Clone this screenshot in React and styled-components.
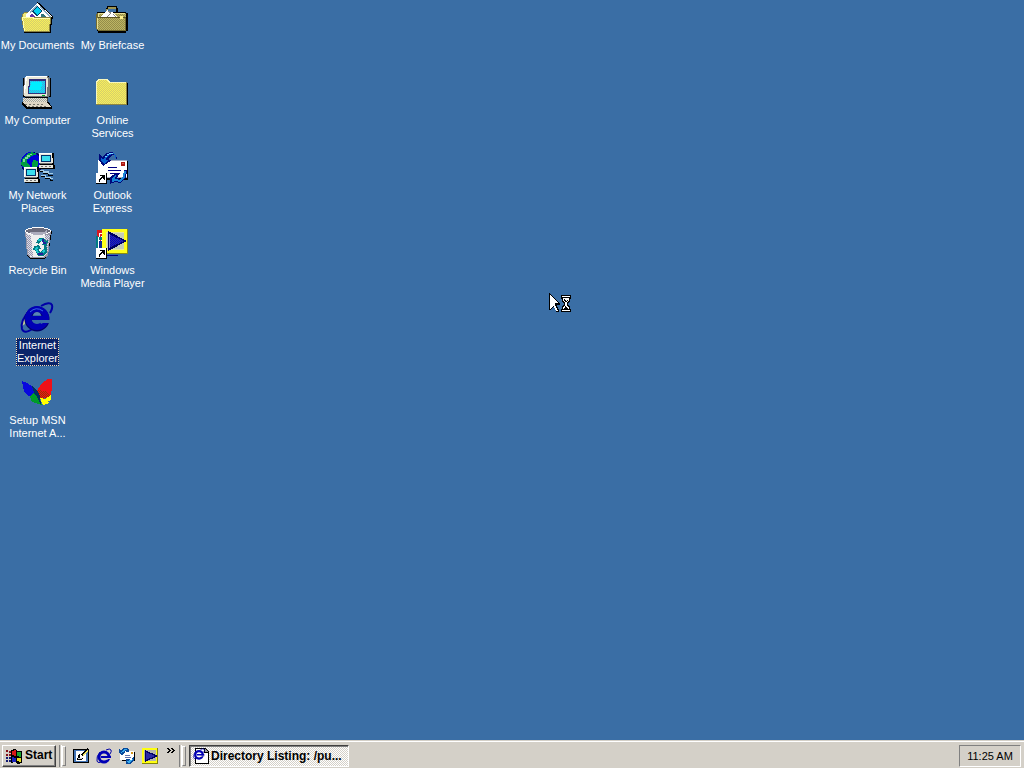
import React from 'react';
import styled, { createGlobalStyle, css } from 'styled-components';

const GlobalStyle = createGlobalStyle`
  * { box-sizing: border-box; }
  body {
    margin: 0;
    background: #3a6ea5;
    font-family: "Liberation Sans", Arial, sans-serif;
    font-size: 11px;
    line-height: 13px;
  }
  button { font: inherit; color: inherit; border: 0; padding: 0; background: none; }
  svg { display: block; }
`;

const Screen = styled.div`
  position: relative;
  display: flex;
  flex-direction: column;
  min-height: 100vh;
  overflow: hidden;
`;

const Desktop = styled.main`
  flex: 1;
  display: grid;
  grid-auto-flow: column;
  grid-template-rows: repeat(6, 75px);
  grid-auto-columns: 75px;
`;

const Shortcut = styled.button`
  display: flex;
  flex-direction: column;
  align-items: center;
  gap: 4px;
  padding-top: 2px;
  color: #fff;
  outline: none;
  & > svg { margin-right: 2px; }
`;

const Label = styled.span`
  border: 1px solid transparent;
  white-space: pre;
  text-align: center;
  ${(p) => p.$selected && css`
    background: #0a246a;
    border: 1px dotted #f5dbb0;
  `}
`;

const Pointer = styled.div`
  position: absolute;
  left: 549px;
  top: 293px;
`;

const Taskbar = styled.footer`
  display: flex;
  align-items: center;
  height: 28px;
  padding: 2px 3px 0 2px;
  background: #d4d0c8;
  border-top: 1px solid #d4d0c8;
  box-shadow: inset 0 1px #fff;
  color: #000;
`;

const StartButton = styled.button`
  display: flex;
  align-items: center;
  gap: 2px;
  width: 54px;
  height: 22px;
  padding-left: 2px;
  font-size: 12px;
  font-weight: bold;
  border: 1px solid;
  border-color: #fff #404040 #404040 #fff;
  box-shadow: inset -1px -1px #808080;
`;

const Grip = styled.div`
  display: flex;
  justify-content: space-between;
  width: 7px;
  height: 22px;
  margin: 0 3px;
  &::before {
    content: "";
    width: 2px;
    border-left: 1px solid #808080;
    border-right: 1px solid #fff;
  }
  &::after {
    content: "";
    width: 3px;
    margin: 1px 0;
    border: 1px solid;
    border-color: #fff #808080 #808080 #fff;
  }
`;

const QuickLaunch = styled.nav`
  display: flex;
  align-items: center;
  gap: 7px;
  width: 107px;
  padding-left: 4px;
`;

const QuickButton = styled.button`
  width: 16px;
  height: 16px;
`;

const MoreButton = styled.button`
  width: 9px;
  height: 16px;
  margin-left: 2px;
  padding-bottom: 9px;
`;

const TaskButton = styled.button`
  display: flex;
  align-items: center;
  gap: 2px;
  width: 160px;
  height: 22px;
  padding: 1px 0 0 3px;
  font-size: 12px;
  font-weight: bold;
  white-space: nowrap;
  border: 1px solid;
  border-color: #404040 #fff #fff #404040;
  box-shadow: inset 1px 1px #808080;
  background: repeating-conic-gradient(#fff 0 25%, #d4d0c8 0 50%) 0 0 / 2px 2px;
`;

const Tray = styled.div`
  display: flex;
  align-items: center;
  justify-content: center;
  width: 62px;
  height: 22px;
  margin-left: auto;
  padding-top: 1px;
  border: 1px solid;
  border-color: #808080 #fff #fff #808080;
`;

const PatternSheet = styled.svg`
  position: absolute;
`;

const Icon = ({ size = 32, view = 32, smooth, children }) => (
  <svg
    width={size}
    height={size}
    viewBox={`0 0 ${view} ${view}`}
    overflow="visible"
    shapeRendering={smooth ? 'auto' : 'crispEdges'}
    aria-hidden="true"
  >
    {children}
  </svg>
);

const Dither = ({ id, a, b }) => (
  <pattern id={id} width="2" height="2" patternUnits="userSpaceOnUse">
    <path fill={a} d="M0 0h2v2H0z" />
    <path fill={b} d="M0 0h1v1H0zM1 1h1v1H1z" />
  </pattern>
);

const Patterns = () => (
  <PatternSheet width="0" height="0" aria-hidden="true">
    <defs>
      <Dither id="manila" a="#f7ef5a" b="#d6ce6b" />
      <Dither id="leather" a="#bdb563" b="#948c4a" />
      <Dither id="glass" a="#00e7ff" b="#4aa5d6" />
      <Dither id="metal" a="#dedee7" b="#9494ad" />
      <Dither id="case" a="#e7e3d6" b="#a5a59c" />
      <Dither id="navy" a="#0000c6" b="#31319c" />
      <Dither id="redshade" a="#ef1018" b="#9c3000" />
    </defs>
  </PatternSheet>
);

const Arrow = () => (
  <g>
    <path fill="#fff" d="M0 21h11v11H0z" />
    <path fill="#000" d="M10 21h1v11H0v-1h10zM4 23h5v5H8v-1H7v-1H6v1H5v1H4v2H3v-3h1v-1h1v-1h1v-1H4z" />
  </g>
);

const Documents = () => (
  <Icon>
    <path fill="#8c8442" d="M1 12l2-2h8l4 5v3H1z" />
    <path fill="#efe77b" d="M2 12l2-1h6l4 4v2H2z" />
    <path fill="#000" d="M16 0l2 1 14 14-1 4-3-2-13-12z" />
    <path fill="#fff" d="M16 1L5 12v4h25l1-2z" />
    <path fill="#8cadc6" d="M19 4l11 11h-1L18 5zM8 10l8-7v1l-7 7z" />
    <path fill="#00426b" d="M16 4l5 5-5 6-5-6z" />
    <path fill="#00ceef" d="M16 5l4 4-4 4-4-4z" />
    <path fill="#6331a5" d="M10 12h2l2 3H9z" />
    <path fill="#31737b" d="M20 12h2l3 3h-5z" />
    <path fill="#000" d="M3 31v-1h26V16h2l-1 15z" />
    <path fill="#8c8442" d="M0 15h30l-1 15H3z" />
    <path fill="url(#manila)" d="M1 16h28l-1 13H3z" />
    <path fill="#ffffad" d="M1 15h11l2 1h15v1H13l-2-1H2l2 13H3z" />
  </Icon>
);

const Briefcase = () => (
  <Icon>
    <path fill="#000" d="M11 4h10v2h1v6h-2V7h-8v4h-2V6h1z" />
    <path fill="#9c9452" d="M12 5h8v2h-8zM10 7h2v4h-2z" />
    <path fill="#000" d="M1 10h29v1h2v18h-2v2H2v-2H1z" />
    <path fill="#736b31" d="M1 11h29v18H2l-2-2V12z" />
    <path fill="url(#leather)" d="M2 16h27v12H2zM3 12h27v3H3z" />
    <path fill="#e7de94" d="M2 11h27v1H3v4H2zM1 16h1v11H1z" />
    <path fill="#fff" d="M5 15l6-7 3 3 2-1 6 5z" />
    <path fill="#848484" d="M11 9l3 3-4 3h1l5-4-3-2zM16 12l3 3h1l-3-4z" />
    <path fill="#5a5221" d="M2 15h28v1H2z" />
    <path fill="#ffef8c" d="M24 14h3v3h-3z" />
  </Icon>
);

const Computer = () => (
  <Icon>
    <path fill="#000" d="M5-1h23v2h2v19h-3v1H4v-1H2V1h3z" />
    <path fill="#737373" d="M5-1h21l3 2v17l-2 2H4L2 18 3 1z" />
    <path fill="#e7e7d6" d="M5-1h21l1 3-1 17H3L4 1z" />
    <path fill="#fff" d="M5-1h21v1H6L4 16H3L4 1z" />
    <path fill="#31317b" d="M8 2h17v15H7z" />
    <path fill="url(#glass)" d="M9 4h15v12H8z" />
    <path fill="#00efff" d="M10 5h11l-1 8H9z" />
    <path fill="#00a521" d="M21 18h3v1h-3z" />
    <path fill="#424242" d="M2 21h25v5H2z" />
    <path fill="url(#case)" d="M2 21h24v4H2z" />
    <path fill="#000" d="M1 25h27l3 5v2H6l-5-4z" />
    <path fill="#ded6c6" d="M1 25h25l4 5H6z" />
    <path fill="#73736b" d="M4 27h2v1H4zm4 0h2v1H8zm4 0h2v1h-2zm4 0h2v1h-2zm4 0h2v1h-2zM7 29h2v1H7zm4 0h2v1h-2zm4 0h2v1h-2zm4 0h2v1h-2zm4 0h2v1h-2z" />
  </Icon>
);

const Folder = () => (
  <Icon>
    <path fill="#000" d="M2 28h30V6h-2v22z" />
    <path fill="#8c8442" d="M0 5l2-3h9l3 3h17v23H0z" />
    <path fill="url(#manila)" d="M1 5l2-2h8l2 3h17v21H1z" />
    <path fill="#f7f7bd" d="M0 5l2-3h9l3 3h16v1H13l-3-3H3L1 5v22H0z" />
  </Icon>
);

const MiniPC = ({ x, y }) => (
  <g transform={`translate(${x} ${y})`}>
    <path fill="#000" d="M1 0h14v12h1v4H1z" />
    <path fill="#e7e7de" d="M0 0h13l1 10H0zM0 12h14v3H0z" />
    <path fill="#fff" d="M0 0h13v1H1v9H0z" />
    <path fill="#00316b" d="M2 2h10v7H2z" />
    <path fill="#39deef" d="M3 3h8v5H3z" />
    <path fill="#737373" d="M1 10h12v1H1zM2 13h2v1H2zm4 0h2v1H6zm4 0h2v1h-2z" />
  </g>
);

const Network = () => (
  <Icon>
    <circle cx="11" cy="11" r="11" fill="#000063" />
    <circle cx="10" cy="10" r="10" fill="#0000d6" />
    <path fill="#009c42" d="M1 8l5-6 5-2 5 2-6 2-1 2-3 1v4l3 2-1 4H4l-4-5zM12 8l5 1v5l-5 3-1-4z" />
    <path fill="#7bd6a5" d="M2 7h2V5h2V3h3V2h2v1h-2v2H7v2H4v3H2z" />
    <MiniPC x={18} y={1} />
    <MiniPC x={3} y={15} />
    <path fill="#000" d="M19 19h4v2h5v2h4v1h-5v-2h-5v-2h-3zM20 24h5v2h5v2h2v1h-3v-2h-5v-2h-4z" />
    <path fill="#a5cee7" d="M19 18h4v1h5v2h4v1h-5v-1h-5v-2h-3zM20 23h5v2h5v1h2v1h-3v-1h-5v-2h-4z" />
  </Icon>
);

const Outlook = () => (
  <Icon>
    <path fill="#000" d="M5 9h27v19H5z" />
    <path fill="#fff" d="M2 8h29v18H2z" />
    <path fill="#a5adc6" d="M3 8h28v1H3zM3 25h28v1H3z" />
    <path fill="#ad1810" d="M25 10h4v4h-4z" />
    <path fill="#d65a4a" d="M26 11h2v1h-2z" />
    <path fill="#000084" d="M12 15h9v1h-9zM12 18h13v1H12zM14 21h10v1H14z" />
    <path fill="#00087b" d="M20 7V4l-3-1-4 3v2h3l-9 6-4-6V2l3 3 4-4 6-1 4 3 1 4z" />
    <path fill="#0863ce" d="M19 6V3l-3-1-5 3-1 3h3l-5 4-3-3V5l2 3 5-6 5-1 3 3v2z" />
    <path fill="#73ceff" d="M11 2h2V1h4v1h-4v1h-2v2H9V4h2z" />
    <path fill="#00087b" d="M31 18l-1 8-6 5-5-1-5 2v-7l5-3h4l-2 4 3 1 3-3 1-6z" />
    <path fill="#1884d6" d="M30 19l-1 6-5 5-5-1-3 1v-4l4-3-1 4 5 1 3-4 1-5z" />
    <Arrow />
  </Icon>
);

const Recycle = () => (
  <Icon>
    <path fill="#000" d="M8 4h23l-4 24-4 4H9l-3-3z" />
    <path fill="#9494a5" d="M4 4h26l-3 25-4 2H9l-3-3z" />
    <path fill="#efefef" d="M5 5l2 23 3 2h12l4-2 2-20z" />
    <path fill="url(#metal)" d="M24 8h5l-3 20-4 2zM5 6l5 3 2 21-5-2z" />
    <ellipse cx="17" cy="4" rx="13" ry="4" fill="#fff" />
    <ellipse cx="17" cy="4" rx="12" ry="3" fill="#6b6b7b" />
    <path fill="#adadbd" d="M8 5h15l3-2v3l-6 2h-7z" />
    <path fill="#007b84" d="M15 16l3-5h5l2 3 2-1-1 6-6-1 2-2-2-2-2 3zM13 19l5-1 2 4h-2l1 4h4v3h-6l-3-6h-2zM23 19l3 1v5l-3 3-1 2-3-4 3-4 1 3z" />
    <path fill="#18c6ce" d="M17 12h4l2 3h-2l-1-1h-3zM15 20h2v2h-1l2 4h-2l-2-4zM23 21l1 3-2 2-1-1 1-2z" />
    <path fill="#21219c" d="M21 12h2v3h2v2h-3zM17 26h5v2h-5z" />
  </Icon>
);

const MediaPlayer = () => (
  <Icon>
    <path fill="#fff" d="M1 3h10v19H1z" />
    <path fill="#d61821" d="M1 3h6v3H3v4H1zM4 7h4v2H5v5H4z" />
    <path fill="#007b84" d="M0 9h2v12H0zM3 10h3v3H3z" />
    <path fill="#102994" d="M3 14h3v7H3z" />
    <path fill="#000084" d="M11 28h11v1H11z" />
    <path fill="#8c8c10" d="M7 2h25v25H7z" />
    <path fill="#ffff18" d="M6 2h25v24H6z" />
    <path fill="#e7e7a5" d="M10 5h18v18H10z" />
    <path fill="#c6ceb5" d="M11 6h17v16H11z" />
    <path fill="#000063" d="M12 4l19 10-19 10z" />
    <path fill="url(#navy)" d="M13 7l15 7-15 7z" />
    <path fill="#8484ce" d="M13 7h1v14h-1z" />
    <Arrow />
  </Icon>
);

const ExplorerShape = () => (
  <g>
    <path fill="#bdc694" d="M1 24l1-8 4-7 7-4-6 8-3 9z" />
    <path fill="none" stroke="#0000a5" strokeWidth="2" d="M20 4q9-5 11-1 1 3-2 8M8 9Q-1 19 1 27q2 6 12-1" />
    <circle cx="16" cy="17" r="9" fill="none" stroke="#00006b" strokeWidth="7" />
    <circle cx="16" cy="16" r="9" fill="none" stroke="#0000b5" strokeWidth="6" />
    <path fill="#3a6ea5" d="M18 18h13v3h-9l-2 1z" />
    <path fill="#0000b5" d="M10 14h17v4H10z" />
    <path fill="#5a84b5" d="M12 13q1-3 4-3t4 3z" />
    <path fill="none" stroke="#396be7" strokeWidth="1" d="M9 10q6-6 13-1" />
  </g>
);

const Explorer = () => <Icon smooth><ExplorerShape /></Icon>;

const ExplorerSmall = ({ size = 16 }) => (
  <Icon size={size} view={16} smooth>
    <path fill="none" stroke="#0000a5" strokeWidth="1" d="M10 2q4-2 5 0 1 1-1 4M4 4Q0 9 1 13q1 3 6 0" />
    <circle cx="8" cy="9" r="5" fill="none" stroke="#0000b5" strokeWidth="3" />
    <path fill="#d4d0c8" d="M9 10h7v1h-4l-1 1z" />
    <path fill="#0000b5" d="M5 8h10v2H5z" />
  </Icon>
);

const Butterfly = () => (
  <Icon>
    <path fill="#0808de" d="M1 4l5 2 6 4 4 4 1 5-5 4-4-4-4-3-2-6z" />
    <path fill="#009c29" d="M9 20l4-5 4 3 4 10-4-1-6-2z" />
    <path fill="#ef1018" d="M27 2h4v9l-1 7-4 3-7-1-3-6 4-7z" />
    <path fill="url(#redshade)" d="M16 13l8 1 5 4-3 3-7 1z" />
    <path fill="#ffff00" d="M19 21l5 1 6-4v5l-3 1 1 2-6 2z" />
    <path fill="#003163" d="M11 9l5 4 3 6 1 9-4-8-3-4z" />
  </Icon>
);

const Flag = () => (
  <Icon size={18} view={18}>
    <path fill="#000" d="M6 3l4-1 3 2h4v12l-4 1-3-2-4 1z" />
    <path fill="#d61818" d="M7 4l3-1 1 1v5l-4-1z" />
    <path fill="#18a531" d="M12 5h4v5l-4-1z" />
    <path fill="#1821bd" d="M7 10l4 1v4H7z" />
    <path fill="#e7de29" d="M12 11h4v4l-4-1z" />
    <path fill="#841018" d="M1 3h2v2H1zm3 1h2v2H4zM1 7h2v2H1zm3 0h2v2H4z" />
    <path fill="#101873" d="M1 10h2v2H1zm3 0h2v2H4zm-3 3h2v2H1zm3 0h2v2H4z" />
  </Icon>
);

const ShowDesktop = () => (
  <Icon size={16} view={16}>
    <path fill="#000" d="M0 1h16v14H0z" />
    <path fill="#4273b5" d="M1 2h14v12H1z" />
    <path fill="#fff" d="M3 3h10v10H3z" />
    <path fill="#000" d="M4 11l2-5h1v4h3l-1 2H4zM8 7l6-7 2 2-6 6z" />
    <path fill="#efe763" d="M10 6l4-4 1 1-5 5z" />
    <path fill="#d6d6d6" d="M5 10h4v1H5z" />
  </Icon>
);

const Mail = () => (
  <Icon size={16} view={16}>
    <path fill="#000" d="M3 4h13v9H3z" />
    <path fill="#fff" d="M1 3h14v9H1z" />
    <path fill="#d69418" d="M12 4h2v2h-2z" />
    <path fill="#6373ad" d="M6 7h5v1H6zM6 9h6v1H6z" />
    <path fill="#084a9c" d="M0 1l2 1 3-2h3l2 2v2H8L6 3 5 4h1L3 7 0 5z" />
    <path fill="#39adef" d="M3 3l3-2h2v1H6L4 4 2 5V4z" />
    <path fill="#084a9c" d="M15 9v4l-4 3H7v-5h4l-1 2 2 1 2-5z" />
    <path fill="#39adef" d="M14 11l-1 2-3 2-2-1v-1z" />
  </Icon>
);

const Player = () => (
  <Icon size={16} view={16}>
    <path fill="#84840a" d="M0 0h16v16H0z" />
    <path fill="#ffff10" d="M0 0h15v15H0z" />
    <path fill="#b5b5ad" d="M2 2h12v11H2z" />
    <path fill="#000063" d="M3 2l13 6-13 6z" />
    <path fill="#2929a5" d="M4 4l9 4-9 4z" />
  </Icon>
);

const Page = () => (
  <Icon size={16} view={16}>
    <path fill="#000" d="M2 0h10l4 4v12H2z" />
    <path fill="#fff" d="M3 1h8v4h4v10H3z" />
    <path fill="#9c9c9c" d="M12 1l3 3h-3z" />
    <ExplorerSmall size={12} />
  </Icon>
);

const Chevrons = () => (
  <svg width="9" height="7" viewBox="0 0 9 7" shapeRendering="crispEdges" aria-hidden="true">
    <path fill="#000" d="M0 0h2v1h1v1h1v1H3v1H2v1H0V4h1V3h1V2H1V1H0zM4 0h2v1h1v1h1v1H7v1H6v1H4V4h1V3h1V2H5V1H4z" />
  </svg>
);

const BusyPointer = () => (
  <svg width="24" height="22" viewBox="0 0 24 22" shapeRendering="crispEdges" aria-hidden="true">
    <path fill="#000" d="M0 0h1v1h1v1h1v1h1v1h1v1h1v1h1v1h1v1h1v1h1v1h1v2H8v2h1v2h1v3H7v-2H6v-2H5v-1H4v1H3v1H2v1H0z" />
    <path fill="#fff" d="M1 2h1v1h1v1h1v1h1v1h1v1h1v1h1v1h1v1H6v3h1v2h1v2h1v1H7v-1H6v-2H5v-2H4v1H3v1H2v1H1z" />
    <path fill="#000" d="M12 2h10v4h-1v3h-1v1h-1v2h1v1h1v3h1v3H12v-3h1v-3h1v-1h1v-2h-1V9h-1V6h-1z" />
    <path fill="#fff" d="M13 3h8v1h-8zM14 5h6v3h-1v1h-1v4h1v1h1v2h-6v-2h1v-1h1V9h-1V8h-1zM13 17h8v1h-8z" />
    <path fill="#000" d="M15 6h1v1h1v1h1V7h1v1h-1v1h-2V8h-1zM16 13h1v1h1v1h1v1h-4v-1h1z" />
  </svg>
);

const shortcuts = [
  { label: 'My Documents', Art: Documents },
  { label: 'My Computer', Art: Computer },
  { label: 'My Network\nPlaces', Art: Network },
  { label: 'Recycle Bin', Art: Recycle },
  { label: 'Internet\nExplorer', Art: Explorer, selected: true },
  { label: 'Setup MSN\nInternet A...', Art: Butterfly },
  { label: 'My Briefcase', Art: Briefcase },
  { label: 'Online\nServices', Art: Folder },
  { label: 'Outlook\nExpress', Art: Outlook },
  { label: 'Windows\nMedia Player', Art: MediaPlayer },
];

export default function App() {
  return (
    <Screen>
      <GlobalStyle />
      <Desktop>
        {shortcuts.map(({ label, Art, selected }) => (
          <Shortcut key={label}>
            <Art />
            <Label $selected={selected}>{label}</Label>
          </Shortcut>
        ))}
      </Desktop>
      <Taskbar>
        <StartButton><Flag />Start</StartButton>
        <Grip />
        <QuickLaunch aria-label="Quick Launch">
          <QuickButton aria-label="Show Desktop"><ShowDesktop /></QuickButton>
          <QuickButton aria-label="Internet Explorer"><ExplorerSmall /></QuickButton>
          <QuickButton aria-label="Outlook Express"><Mail /></QuickButton>
          <QuickButton aria-label="Windows Media Player"><Player /></QuickButton>
          <MoreButton aria-label="More"><Chevrons /></MoreButton>
        </QuickLaunch>
        <Grip />
        <TaskButton><Page />Directory Listing: /pu...</TaskButton>
        <Tray><time>11:25 AM</time></Tray>
      </Taskbar>
      <Pointer><BusyPointer /></Pointer>
      <Patterns />
    </Screen>
  );
}
